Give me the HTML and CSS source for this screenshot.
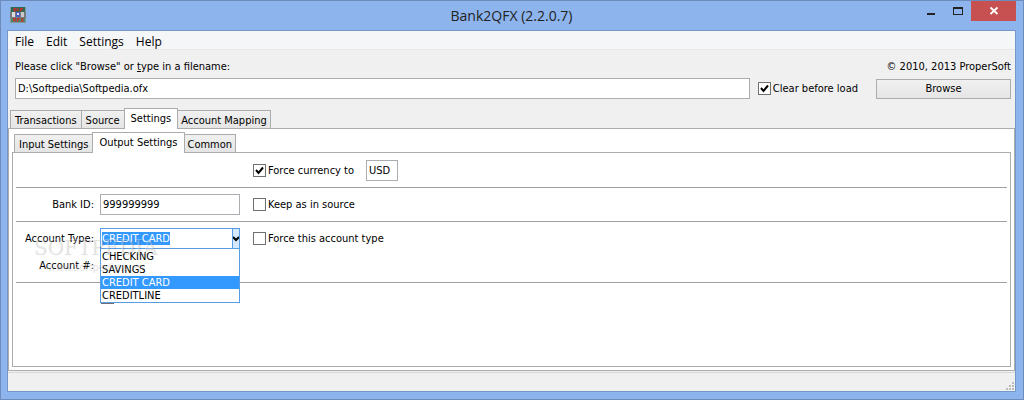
FILE: index.html
```html
<!DOCTYPE html>
<html lang="en">
<head>
    <meta charset="UTF-8">
    <meta name="viewport" content="width=device-width, initial-scale=1.0">
    <title>Bank2QFX (2.2.0.7)</title>
    <link rel="stylesheet" href="styles.css">
</head>
<body>
    <div class="window">
        <header class="titlebar">
            <svg class="app-icon" width="16" height="16" viewBox="0 0 16 16">
                <rect width="16" height="16" fill="#7e9a93"/>
                <rect x="1" width="14" height="5" fill="#2c6b53"/>
                <rect x="1" y="11" width="14" height="4" fill="#4b8a70"/>
                <path d="M4 1.500h2v2.500h-2zM8 1v3.500M10.500 4.500V1.500h2.500M10 3h2.500" fill="none" stroke="#d6262c"/>
                <rect y="5" width="16" height="6" fill="#77797e"/>
                <rect x="2" y="5" width="3" height="5" fill="#dcdcdf"/>
                <rect x="11" y="5" width="3" height="5" fill="#c9c9cd"/>
                <rect x="6" y="5" width="4" height="5" fill="#4a5cc0"/>
                <rect x="7" y="6" width="2" height="2" fill="#dfe4ff"/>
                <path d="M3.500 11.500h2v2.500h-2zM7.500 15v-3.500h2M7.500 13h2M11 11l2.500 4M13.500 11l-2.500 4" fill="none" stroke="#d6262c"/>
            </svg>
            <h1 class="title">Bank2QFX (2.2.0.7)</h1>
            <div class="window-buttons">
                <button class="win-btn" aria-label="Minimize"><svg width="10" height="10" viewBox="0 0 10 10"><rect x="1" y="8" width="8" height="2" fill="#222"/></svg></button>
                <button class="win-btn" aria-label="Maximize"><svg width="10" height="10" viewBox="0 0 10 10"><path d="M0 2h10v8H0zM1 4v5h8V4z" fill="#222" fill-rule="evenodd"/></svg></button>
                <button class="win-btn win-close" aria-label="Close"><svg width="10" height="10" viewBox="0 0 10 10"><path d="M1.500 2.500l7 6.500M8.500 2.500l-7 6.500" stroke="#fff" stroke-width="1.800"/></svg></button>
            </div>
        </header>

        <main class="client">
            <nav class="menu">
                <button>File</button>
                <button>Edit</button>
                <button>Settings</button>
                <button>Help</button>
            </nav>

            <div class="info">
                <label for="filename">Please click "Browse" or <u>t</u>ype in a filename:</label>
                <span>© 2010, 2013 ProperSoft</span>
            </div>
            <div class="file-row">
                <input type="text" class="text-box file-name" id="filename" value="D:\Softpedia\Softpedia.ofx">
                <label class="check"><input type="checkbox" checked>Clear before load</label>
                <button class="browse">Browse</button>
            </div>

            <div class="tabs">
                <button class="tab">Transactions</button>
                <button class="tab">Source</button>
                <button class="tab active">Settings</button>
                <button class="tab">Account Mapping</button>
            </div>
            <div class="panel outer">
                <div class="tabs">
                    <button class="tab">Input Settings</button>
                    <button class="tab active">Output Settings</button>
                    <button class="tab">Common</button>
                </div>
                <div class="panel inner">
                    <div class="section">
                        <div class="currency">
                            <label class="check"><input type="checkbox" checked>Force currency to</label>
                            <input type="text" class="text-box code" value="USD" aria-label="Currency">
                        </div>
                    </div>
                    <div class="section">
                        <label class="name" for="bank">Bank ID:</label>
                        <input type="text" class="text-box" id="bank" value="999999999">
                        <label class="check"><input type="checkbox">Keep as in source</label>
                    </div>
                    <div class="section account">
                        <label class="name" for="type">Account Type:</label>
                        <div class="combo">
                            <select id="type">
                                <option>CHECKING</option>
                                <option>SAVINGS</option>
                                <option selected>CREDIT CARD</option>
                                <option>CREDITLINE</option>
                            </select>
                            <span class="arrow"><svg width="6" height="6" viewBox="0 0 6 6"><path d="M0 1l3 3 3-3" fill="none" stroke="#000" stroke-width="2"/></svg></span>
                            <ul class="list" role="listbox">
                                <li>CHECKING</li>
                                <li>SAVINGS</li>
                                <li class="selected">CREDIT CARD</li>
                                <li>CREDITLINE</li>
                            </ul>
                        </div>
                        <label class="check"><input type="checkbox">Force this account type</label>
                        <label class="name" for="account">Account #:</label>
                        <input type="text" class="text-box" id="account">
                        <div class="watermark"><b>SOFTPEDIA</b><span>www.softpedia.com</span></div>
                    </div>
                    <div class="section last">
                        <div class="check option"><input type="checkbox" aria-label="Account option"></div>
                    </div>
                </div>
            </div>

            <footer class="status">
                <svg width="9" height="9" viewBox="0 0 9 9"><path d="M6 0h2v2H6zM3 3h2v2H3zM6 3h2v2H6zM0 6h2v2H0zM3 6h2v2H3zM6 6h2v2H6z" fill="#bdbdbd"/></svg>
            </footer>
        </main>
    </div>
</body>
</html>
```

FILE: styles.css
```css
* {
    box-sizing: border-box;
}
body {
    margin: 0;
    font: 11px/13px "DejaVu Sans Condensed", "DejaVu Sans", sans-serif;
    color: #000;
}
button, input, select {
    font: inherit;
    color: inherit;
    margin: 0;
    border-radius: 0;
}
.window {
    display: flex;
    flex-direction: column;
    min-height: 100vh;
    padding: 0 7px 7px 6px;
    background: #8db4ed;
    border: 1px solid #6b8cbd;
}
.titlebar {
    display: grid;
    grid-template-columns: 1fr auto 1fr;
    height: 29px;
}
.app-icon {
    margin: 6px 0 0 3px;
}
.title {
    margin: 4px 0 0;
    font: 14px/22px "Open Sans", sans-serif;
    color: #222;
}
.window-buttons {
    display: flex;
    justify-content: flex-end;
    height: 20px;
}
.win-btn {
    width: 27px;
    padding: 0;
    border: 0;
    background: none;
}
.win-close {
    width: 45px;
    background: #c75050;
}
.client {
    display: flex;
    flex-direction: column;
    flex: 1;
    background: #f0f0f0;
    border: 1px solid #7496c9;
}
.menu {
    display: flex;
    gap: 12px;
    height: 19px;
    padding: 0 7px;
    background: #f5f6f8;
    border-bottom: 1px solid #e8e8e8;
}
.menu button {
    padding: 2px 0 0;
    border: 0;
    background: none;
    font: 12px/18px "Open Sans", sans-serif;
}
.info {
    display: flex;
    justify-content: space-between;
    padding: 10px 4px 0 7px;
}
.file-row {
    display: flex;
    align-items: center;
    padding: 5px 4px 0 7px;
}
.text-box {
    width: 100%;
    height: 21px;
    padding: 0 2px;
    border: 1px solid #abadb3;
    background: #fff;
}
.file-name {
    flex: 1;
    margin-right: 8px;
}
.check {
    display: flex;
    align-items: center;
    gap: 2px;
    white-space: nowrap;
}
.check input {
    appearance: none;
    width: 13px;
    height: 13px;
    border: 1px solid #707070;
    background: #fff;
}
.check input:checked {
    background: #fff url("data:image/svg+xml,%3Csvg xmlns='http://www.w3.org/2000/svg' viewBox='0 0 11 11'%3E%3Cpath d='M2 5l2.500 3L9 2.500' fill='none' stroke='%23000' stroke-width='2'/%3E%3C/svg%3E");
}
.browse {
    width: 135px;
    height: 20px;
    margin-left: 18px;
    padding: 0;
    border: 1px solid #acacac;
    background: linear-gradient(#f0f0f0, #e5e5e5);
}
.tabs {
    display: flex;
    align-items: flex-end;
    height: 20px;
    padding: 0 2px;
}
.client > .tabs {
    margin-top: 9px;
}
.tab {
    height: 18px;
    padding: 1px 4px 0;
    border: 1px solid #acacac;
    border-bottom: 0;
    background: linear-gradient(#f0f0f0, #e5e5e5);
    white-space: nowrap;
}
.tab + .tab {
    border-left: 0;
}
.tab.active {
    height: 21px;
    margin-bottom: -1px;
    padding: 0 6px 2px;
    border-left: 1px solid #acacac;
    margin-left: -1px;
    background: #fff;
    z-index: 1;
}
.active + .tab {
    padding: 1px 3px 0;
}
.panel {
    display: flex;
    flex-direction: column;
    flex: 1;
    border: 1px solid #acacac;
    background: #fff;
}
.outer {
    padding: 3px;
}
.inner {
    padding: 0 3px;
}
.section {
    display: grid;
    grid-template-columns: 78px 140px auto;
    column-gap: 6px;
    align-content: center;
    align-items: center;
    justify-content: start;
    min-height: 34px;
    border-bottom: 1px solid #a0a0a0;
}
.section:first-child {
    min-height: 35px;
}
.section > .check {
    margin-left: 7px;
}
.name {
    text-align: right;
}
.currency {
    display: flex;
    gap: 12px;
    grid-column: 3;
    margin-left: 7px;
}
.code {
    width: 32px;
}
.account {
    position: relative;
    row-gap: 6px;
    min-height: 61px;
}
.last {
    min-height: 29px;
    border-bottom: 0;
}
.last > .option {
    grid-column: 2;
    margin-left: 1px;
}
.last input {
    border-color: #707070;
}
.combo {
    position: relative;
    display: flex;
    align-items: center;
    justify-content: space-between;
    height: 21px;
    padding-left: 1px;
    border: 1px solid #569de5;
    background: #fff;
}
.combo select {
    appearance: none;
    height: 13px;
    padding: 0;
    border: 0;
    background: #3399ff;
    color: #fff;
}
.arrow {
    display: flex;
    align-items: center;
    height: 19px;
    border-left: 1px solid #569de5;
    background: #d5e8fc;
}
.list {
    position: absolute;
    top: 19px;
    left: -1px;
    right: -1px;
    margin: 0;
    padding: 1px 0 0;
    border: 1px solid #569de5;
    background: #fff;
    list-style: none;
    z-index: 1;
}
.list li {
    padding-left: 1px;
}
.list .selected {
    background: #3399ff;
    color: #fff;
}
.watermark {
    position: absolute;
    top: 12px;
    left: 17px;
    z-index: 2;
    display: flex;
    flex-direction: column;
    align-items: center;
    color: rgba(255, 255, 255, 0.3);
    text-shadow: 1px 1px 1px rgba(0, 0, 0, 0.15);
    pointer-events: none;
}
.watermark b {
    font: 20px/26px "DejaVu Serif", serif;
}
.status {
    display: flex;
    align-items: flex-end;
    justify-content: flex-end;
    height: 19px;
    margin-top: 1px;
    border-top: 1px solid #d7d7d7;
}
```
